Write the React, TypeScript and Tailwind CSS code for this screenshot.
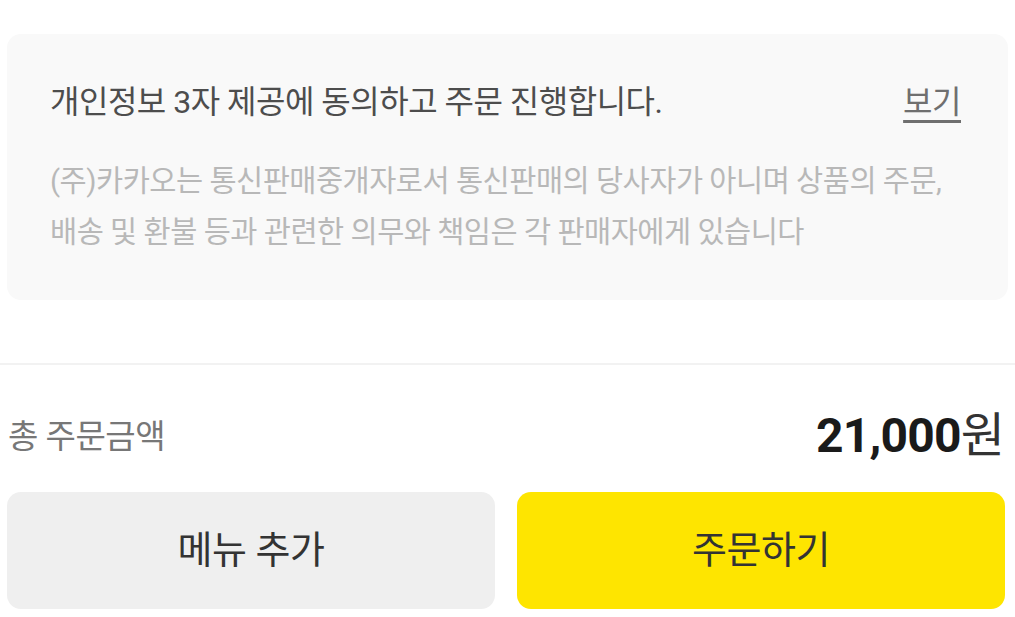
import React from 'react';

const font = { fontFamily: 'Roboto, "Noto Sans CJK KR", sans-serif' };

export default function App() {
  return (
    <div className="w-[1015px] h-[617px] bg-white overflow-hidden" style={font}>
      <div className="px-[7px] pt-[34px]">
        <div className="bg-[#f9f9f9] rounded-[14px] h-[266px] pl-[43px] pr-[47px] pt-[52px]">
          <div className="flex items-center justify-between h-[32px]">
            <span className="text-[32px] leading-none text-[#4d4d4d] tracking-[-0.5px]">
              개인정보 3자 제공에 동의하고 주문 진행합니다.
            </span>
            <span className="text-[32px] leading-none text-[#6f6f6f] underline underline-offset-[7px] tracking-[-0.5px]">
              보기
            </span>
          </div>
          <div className="mt-[38px] text-[29.5px] leading-[51px] text-[#b8b8b8] tracking-[-0.5px]">
            <div>(주)카카오는 통신판매중개자로서 통신판매의 당사자가 아니며 상품의 주문,</div>
            <div>배송 및 환불 등과 관련한 의무와 책임은 각 판매자에게 있습니다</div>
          </div>
        </div>
      </div>

      <div className="mt-[63px] h-[2px] bg-[#f2f2f2]" />

      <div className="flex items-center justify-between h-[48px] pl-[8px] pr-[11px] mt-[47px]">
        <span className="text-[33px] leading-none text-[#777777] tracking-[-0.5px]">총 주문금액</span>
        <span className="text-[48px] leading-none text-[#1a1a1a] tracking-[-0.8px]">
          <span className="font-bold">21,000</span>
          <span className="font-normal text-[#333333]">원</span>
        </span>
      </div>

      <div className="flex gap-[22px] pl-[7px] pr-[10px] mt-[32px]">
        <button className="flex-1 h-[117px] rounded-[14px] bg-[#efefef] text-[38px] text-[#333333] tracking-[-0.5px]">
          메뉴 추가
        </button>
        <button className="flex-1 h-[117px] rounded-[14px] bg-[#fee500] text-[38px] text-[#333333] tracking-[-0.5px]">
          주문하기
        </button>
      </div>
    </div>
  );
}
